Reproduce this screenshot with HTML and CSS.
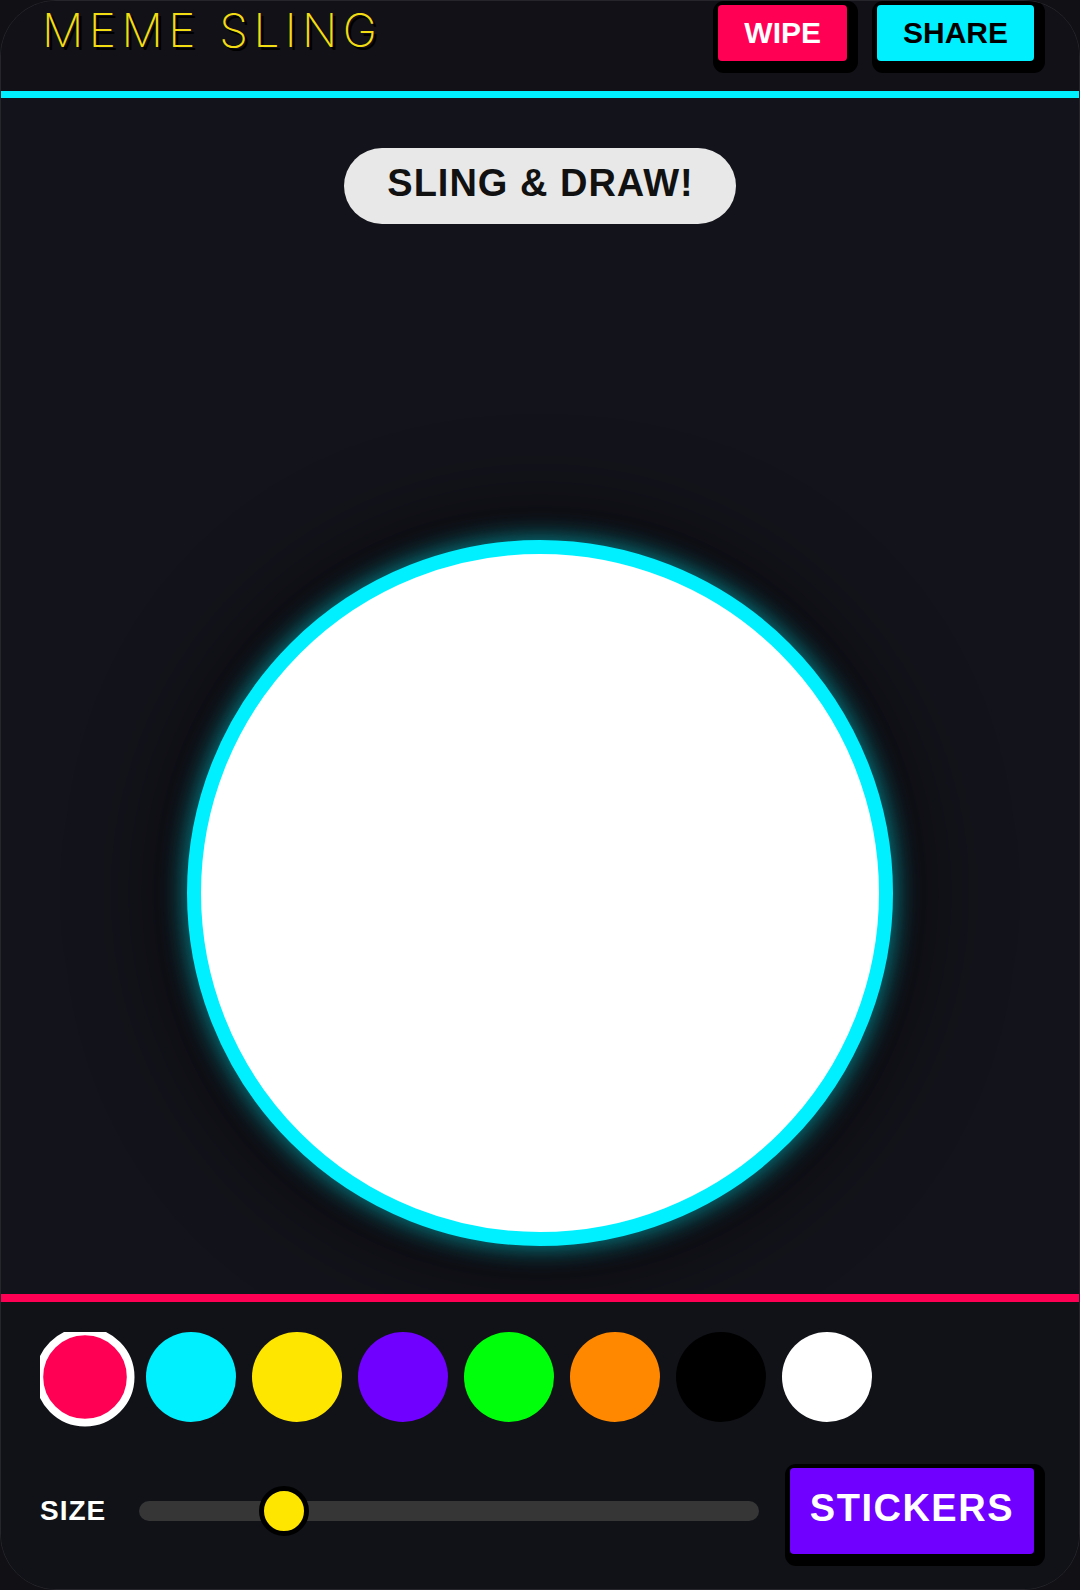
FILE: index.html
```html
<!DOCTYPE html>
<html lang="en">
<head>
    <meta charset="UTF-8">
    <meta name="viewport" content="width=device-width, initial-scale=1.0">
    <title>Meme Sling</title>
    <link rel="stylesheet" href="styles.css">
</head>
<body>
    <div class="app">
        <header class="topbar">
            <h1 class="logo">MEME SLING</h1>
            <div class="top-actions">
                <button class="btn btn-wipe">WIPE</button>
                <button class="btn btn-share">SHARE</button>
            </div>
        </header>

        <main class="stage">
            <div class="hint">SLING &amp; DRAW!</div>
            <!-- drawing surface -->
            <canvas class="board" width="678" height="678"></canvas>
        </main>

        <footer class="toolbar">
            <div class="palette">
                <button class="swatch red selected"></button>
                <button class="swatch cyan"></button>
                <button class="swatch yellow"></button>
                <button class="swatch purple"></button>
                <button class="swatch green"></button>
                <button class="swatch orange"></button>
                <button class="swatch black"></button>
                <button class="swatch white"></button>
            </div>

            <div class="size-row">
                <label class="size-label" for="brushSize">SIZE</label>
                <input type="range" id="brushSize" min="2" max="40" value="10">
                <button class="btn btn-stickers">STICKERS</button>
            </div>
        </footer>
    </div>
</body>
</html>
```

FILE: styles.css
```css
body {
    margin: 0;
    padding: 0;
    background-color: #111115;
    font-family: "Liberation Sans", Arial, sans-serif;
}

.app {
    height: 100vh;
    box-sizing: border-box;
    display: flex;
    flex-direction: column;
    background-color: #13131b;
    border: 1px solid #25252b;
    border-radius: 56px;
    overflow: hidden;
}

/* Top bar */
.topbar {
    height: 97px;
    box-sizing: border-box;
    display: flex;
    justify-content: space-between;
    align-items: flex-start;
    padding: 4px 45px 0 41px;
    background-color: #111117;
    border-bottom: 7px solid #00f0ff;
}

.logo {
    margin: 2px 0 0;
    font-family: Inter, "Liberation Sans", sans-serif;
    font-size: 46px;
    font-weight: 200;
    line-height: 46px;
    letter-spacing: 5.5px;
    color: #f2dc12;
    text-shadow: 3px 3px 0 #000;
}

.top-actions {
    display: flex;
    gap: 30px;
}

.btn {
    font-family: "Liberation Sans", Arial, sans-serif;
    font-weight: bold;
    border: none;
    border-radius: 4px;
    cursor: pointer;
    box-shadow: 3px 4px 0 8px #000;
}

.btn-wipe,
.btn-share {
    font-size: 30px;
    line-height: 34px;
    padding: 11px 26px;
}

.btn-wipe {
    background-color: #ff0055;
    color: #fff;
}

.btn-share {
    background-color: #00f0ff;
    color: #000;
}

/* Drawing area */
.stage {
    flex: 1;
    display: flex;
    flex-direction: column;
    align-items: center;
    padding: 50px 0 48px;
}

.hint {
    background-color: #e8e8e8;
    color: #111;
    font-size: 38px;
    font-weight: bold;
    letter-spacing: 1px;
    line-height: 44px;
    padding: 13px 42px 19px 43px;
    border-radius: 40px;
}

.board {
    margin-top: auto;
    background-color: #fff;
    border: 14px solid #00f0ff;
    border-radius: 50%;
    box-shadow: 0 0 26px 2px rgba(0, 240, 255, 0.55), 0 0 90px 20px rgba(0, 0, 0, 0.6);
}

/* Bottom toolbar */
.toolbar {
    background-color: #101217;
    border-top: 8px solid #ff0055;
    padding: 30px 45px 35px 39px;
}

.palette {
    display: flex;
    gap: 16px;
    padding-bottom: 10px;
    overflow-x: auto;
    scrollbar-width: none;
}

.swatch {
    flex: none;
    width: 90px;
    height: 90px;
    box-sizing: border-box;
    border: none;
    border-radius: 50%;
    padding: 0;
    cursor: pointer;
}

.swatch.selected {
    border: 7px solid #fff;
    transform: scale(1.1);
}

.swatch.red { background-color: #ff0055; }
.swatch.cyan { background-color: #00f0ff; }
.swatch.yellow { background-color: #ffe600; }
.swatch.purple { background-color: #7000ff; }
.swatch.green { background-color: #00ff0a; }
.swatch.orange { background-color: #ff8800; }
.swatch.black { background-color: #000; }
.swatch.white { background-color: #fff; }

.size-row {
    display: flex;
    align-items: center;
    margin-top: 36px;
}

.size-label {
    color: #fff;
    font-size: 28px;
    font-weight: bold;
    letter-spacing: 1px;
}

#brushSize {
    flex: 1;
    -webkit-appearance: none;
    appearance: none;
    background: transparent;
    height: 50px;
    margin: 0 31px 0 33px;
}

#brushSize::-webkit-slider-runnable-track {
    height: 20px;
    background-color: #363636;
    border-radius: 10px;
}

#brushSize::-webkit-slider-thumb {
    -webkit-appearance: none;
    width: 50px;
    height: 50px;
    box-sizing: border-box;
    margin-top: -15px;
    border-radius: 50%;
    background-color: #ffe600;
    border: 5px solid #000;
}

.btn-stickers {
    background-color: #7000ff;
    color: #fff;
    font-size: 38px;
    letter-spacing: 1.5px;
    line-height: 44px;
    padding: 18px 20px 24px 20px;
}
```
